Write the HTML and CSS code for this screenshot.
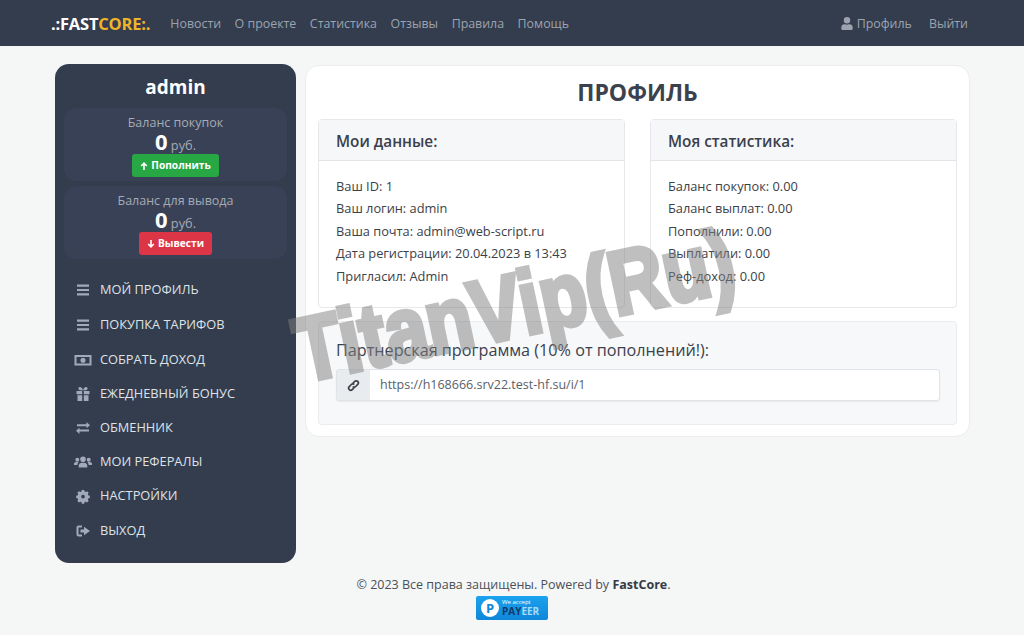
FILE: index.html
```html
<!DOCTYPE html>
<html lang="en">
<head>
    <meta charset="UTF-8">
    <meta name="viewport" content="width=device-width, initial-scale=1.0">
    <title>FastCore</title>
    <link rel="stylesheet" href="styles.css">
</head>
<body>
    <nav class="navbar">
        <a class="brand" href="#">.:FAST<span class="brand-accent">CORE:.</span></a>
        <div class="nav-links">
            <a href="#">Новости</a>
            <a href="#">О проекте</a>
            <a href="#">Статистика</a>
            <a href="#">Отзывы</a>
            <a href="#">Правила</a>
            <a href="#">Помощь</a>
        </div>
        <div class="nav-right">
            <a href="#">
                <svg class="nav-icon" viewBox="0 0 448 512"><path fill="currentColor" d="M224 256a128 128 0 1 0 0-256 128 128 0 0 0 0 256zm90 32h-17a174 174 0 0 1-146 0h-17A134 134 0 0 0 0 422v42a48 48 0 0 0 48 48h352a48 48 0 0 0 48-48v-42a134 134 0 0 0-134-134z"/></svg>
                Профиль
            </a>
            <a href="#">Выйти</a>
        </div>
    </nav>

    <div class="page">
        <aside class="sidebar">
            <div class="user-name">admin</div>
            <div class="balance">
                <div class="balance-title">Баланс покупок</div>
                <div class="balance-sum"><b>0</b> руб.</div>
                <a class="btn btn-green" href="#">
                    <svg viewBox="0 0 10 10"><path fill="none" stroke="currentColor" stroke-width="2" d="M5 10V1.500M1.500 5 5 1.500 8.500 5"/></svg>
                    Пополнить
                </a>
            </div>
            <div class="balance">
                <div class="balance-title">Баланс для вывода</div>
                <div class="balance-sum"><b>0</b> руб.</div>
                <a class="btn btn-red" href="#">
                    <svg viewBox="0 0 10 10"><path fill="none" stroke="currentColor" stroke-width="2" d="M5 0v8.500M1.500 5 5 8.500 8.500 5"/></svg>
                    Вывести
                </a>
            </div>
            <ul class="menu">
                <li class="menu-item h35">
                    <svg viewBox="0 0 18 16"><path fill="currentColor" d="M3 2.500h12v2.200H3zM3 6.900h12v2.200H3zM3 11.300h12v2.200H3z"/></svg>
                    Мой профиль
                </li>
                <li class="menu-item h35">
                    <svg viewBox="0 0 18 16"><path fill="currentColor" d="M3 2.500h12v2.200H3zM3 6.900h12v2.200H3zM3 11.300h12v2.200H3z"/></svg>
                    Покупка тарифов
                </li>
                <li class="menu-item h35">
                    <svg viewBox="0 0 18 16"><path fill="currentColor" fill-rule="evenodd" d="M.500 3h17v10.500H.500zM2.500 5v6.500h13V5zM9 5.700a2.500 2.500 0 1 1 0 5.100 2.500 2.500 0 0 1 0-5.100z"/></svg>
                    Собрать доход
                </li>
                <li class="menu-item">
                    <svg viewBox="0 0 18 16"><path fill="currentColor" d="M2.500 5h5.700v3.200H2.500zM9.800 5h5.700v3.200H9.800zM3.500 9.200h4.700V15H3.500zM9.800 9.200h4.700V15H9.800zM5.500 1c1.500-.4 3 1.200 3.500 3.200C9.500 2.200 11 .6 12.500 1c1.600.5 1.300 3.200-.5 3.200H6C4.200 4.200 3.900 1.500 5.500 1z"/></svg>
                    Ежедневный бонус
                </li>
                <li class="menu-item">
                    <svg viewBox="0 0 18 16"><path fill="currentColor" d="M3 4.300h9.500V2L16 5.300l-3.500 3V6.200H3zM15 9.600H5.500V7.700L2 10.800l3.500 3.100v-2.300H15z"/></svg>
                    Обменник
                </li>
                <li class="menu-item">
                    <svg viewBox="0 0 18 16"><path fill="currentColor" d="M9 2.500a2.800 2.800 0 1 1 0 5.600 2.800 2.800 0 0 1 0-5.600zM3.300 3.800a2 2 0 1 1 0 4 2 2 0 0 1 0-4zM14.700 3.800a2 2 0 1 1 0 4 2 2 0 0 1 0-4zM4.700 13.500v-1.800C4.700 10 6.200 8.800 8 8.800h2c1.800 0 3.300 1.200 3.300 2.900v1.800zM0 11V9.800c0-1 1-1.800 2-1.800h2.600C3.600 8.800 3.500 10 3.400 11zM18 11V9.800c0-1-1-1.800-2-1.800h-2.600c1 .8 1.100 2 1.200 3z"/></svg>
                    Мои рефералы
                </li>
                <li class="menu-item">
                    <svg viewBox="0 0 18 16"><path fill="currentColor" fill-rule="evenodd" d="M7.500.800h3l.5 2 1.300.6 1.800-1.100 2 2.100-1.100 1.800.5 1.300 2 .5v2.900l-2 .5-.5 1.300 1.100 1.800-2 2-1.800-1-1.300.5-.5 2h-3l-.5-2-1.300-.5-1.800 1-2-2 1.100-1.800-.5-1.300-2-.5V8l2-.5.5-1.300-1.100-1.800 2-2.100 1.800 1.100L7 2.800zM9 6.800a2.300 2.300 0 1 0 0 4.600 2.300 2.300 0 0 0 0-4.600z" transform="translate(1.800 1.300) scale(.8)"/></svg>
                    Настройки
                </li>
                <li class="menu-item h35">
                    <svg viewBox="0 0 18 16"><path fill="currentColor" d="M10 6.500V3.800L16 8l-6 4.200V9.500H6.500v-3zM8 2.500H4.500A2 2 0 0 0 2.500 4.500v7a2 2 0 0 0 2 2H8v-2H4.500v-7H8z"/></svg>
                    Выход
                </li>
            </ul>
        </aside>

        <main class="content">
            <h1>ПРОФИЛЬ</h1>
            <div class="cards">
                <section class="card">
                    <h2 class="card-header">Мои данные:</h2>
                    <div class="card-body">
                        <p>Ваш ID: 1</p>
                        <p>Ваш логин: admin</p>
                        <p>Ваша почта: admin@web-script.ru</p>
                        <p>Дата регистрации: 20.04.2023 в 13:43</p>
                        <p>Пригласил: Admin</p>
                    </div>
                </section>
                <section class="card">
                    <h2 class="card-header">Моя статистика:</h2>
                    <div class="card-body">
                        <p>Баланс покупок: 0.00</p>
                        <p>Баланс выплат: 0.00</p>
                        <p>Пополнили: 0.00</p>
                        <p>Выплатили: 0.00</p>
                        <p>Реф-доход: 0.00</p>
                    </div>
                </section>
            </div>
            <section class="partner">
                <h2>Партнерская программа (10% от пополнений!):</h2>
                <div class="input-group">
                    <span class="input-addon">
                        <svg viewBox="0 0 16 16"><path fill="none" stroke="currentColor" stroke-width="2" d="M7 5.500 9.500 3a2.600 2.600 0 0 1 3.700 3.700l-2.500 2.500a2.600 2.600 0 0 1-3.700 0M9 10.500 6.500 13a2.600 2.600 0 0 1-3.700-3.700l2.500-2.500a2.600 2.600 0 0 1 3.700 0"/></svg>
                    </span>
                    <span class="input-value">https://h168666.srv22.test-hf.su/i/1</span>
                </div>
            </section>
        </main>
    </div>

    <footer class="footer">
        <div class="copyright">© 2023 Все права защищены. Powered by <b>FastCore</b>.</div>
        <div class="payeer">
            <span class="payeer-logo">P</span>
            <span class="payeer-text"><small>We accept</small><b>PAY<i>EER</i></b></span>
        </div>
    </footer>

    <div class="watermark">TitanVip(Ru)</div>
</body>
</html>
```

FILE: styles.css
```css
* {
    box-sizing: border-box;
    margin: 0;
    padding: 0;
}

body {
    font-family: 'Open Sans', 'Noto Sans', sans-serif;
    font-size: 12.8px;
    line-height: 1.5;
    height: 635px;
    overflow: hidden;
    background-color: #f5f6f6;
    color: #3c4148;
}

a {
    color: inherit;
    text-decoration: none;
}

.navbar {
    display: flex;
    align-items: center;
    height: 46px;
    padding: 3px 56px 0 51px;
    font-size: 12.400px;
    background-color: #333d4e;
    color: #9da3ae;
}

.brand {
    font-size: 16.500px;
    font-weight: 700;
    color: #fff;
    margin-right: 20px;
    letter-spacing: -0.2px;
}

.brand-accent {
    color: #f0b429;
}

.nav-links {
    display: flex;
    gap: 13.500px;
}

.nav-right {
    display: flex;
    gap: 17px;
    margin-left: auto;
}

.nav-icon {
    width: 12px;
    height: 13px;
    vertical-align: -2px;
}

.page {
    display: flex;
    align-items: flex-start;
    gap: 9px;
    padding: 18px 54px 0 55px;
}

.sidebar {
    flex: 0 0 241px;
    height: 499px;
    padding: 10px 9px 0;
    border-radius: 14px;
    background-color: #333d4e;
    color: #a6abb5;
}

.user-name {
    font-size: 19px;
    font-weight: 700;
    line-height: 26px;
    color: #fff;
    text-align: center;
    margin-bottom: 8px;
}

.balance {
    height: 73px;
    margin-bottom: 5px;
    padding-top: 6px;
    border-radius: 12px;
    background-color: #384155;
    text-align: center;
}

.balance-title {
    font-size: 12.500px;
    line-height: 18px;
}

.balance-sum {
    height: 24px;
    margin-top: -2px;
    line-height: 18px;
}

.balance-sum b {
    font-size: 22px;
    line-height: 1;
    color: #fff;
}

.btn {
    display: flex;
    align-items: center;
    gap: 3px;
    width: fit-content;
    height: 23px;
    margin: 0 auto;
    padding: 0 8px;
    border-radius: 3px;
    font-size: 10.200px;
    font-weight: 700;
    color: #fff;
}

.btn svg {
    width: 8px;
    height: 8px;
}

.btn-green {
    background-color: #28a745;
}

.btn-red {
    background-color: #dc3545;
}

.menu {
    list-style: none;
    margin-top: 13px;
}

.menu-item {
    display: flex;
    align-items: center;
    height: 34px;
    padding-left: 10px;
    text-transform: uppercase;
    color: #dfe2e7;
}

.h35 {
    height: 35px;
}

.menu-item svg {
    width: 18px;
    height: 16px;
    margin-right: 8px;
    color: #a2a9b8;
}

.content {
    flex: 1;
    height: 372px;
    margin-top: 1px;
    padding: 0 12px;
    border: 1px solid #ececec;
    border-radius: 14px;
    background-color: #fff;
}

h1 {
    font-size: 23px;
    font-weight: 700;
    line-height: 52px;
    margin-bottom: 1px;
    color: #3b424e;
    text-align: center;
}

.cards {
    display: grid;
    grid-template-columns: 307px 307px;
    gap: 25px;
}

.card {
    height: 189px;
    border: 1px solid #e6e8eb;
    border-radius: 4px;
}

.card-header {
    height: 41px;
    padding: 0 17px;
    font-size: 15.300px;
    font-weight: 600;
    line-height: 42px;
    color: #3a414c;
    background-color: #f6f7f9;
    border-bottom: 1px solid #e2e4e8;
}

.card-body {
    padding: 13.500px 17px;
    line-height: 22.500px;
}

.partner {
    height: 104px;
    margin-top: 13px;
    padding: 16px 16px 0 17px;
    border: 1px solid #eaecef;
    border-radius: 4px;
    background-color: #f7f8fa;
}

.partner h2 {
    font-size: 16.200px;
    font-weight: 500;
    line-height: 24px;
    color: #3a414c;
    margin-bottom: 7px;
}

.input-group {
    display: flex;
    height: 32px;
    border: 1px solid #e0e3e7;
    border-radius: 3px;
    background-color: #fff;
    box-shadow: 0 1px 2px rgba(0, 0, 0, 0.06);
}

.input-addon {
    display: flex;
    align-items: center;
    justify-content: center;
    width: 33px;
    background-color: #e9ecef;
    color: #3c4148;
}

.input-addon svg {
    width: 13px;
    height: 13px;
}

.input-value {
    padding-left: 10px;
    font-size: 12.500px;
    line-height: 30px;
    color: #5a6068;
}

.footer {
    margin-top: 12px;
    text-align: center;
    font-size: 12.500px;
    line-height: 20px;
    color: #4b5058;
}

.copyright {
    padding-left: 3px;
}

.footer b {
    color: #333a44;
}

.payeer {
    display: flex;
    align-items: center;
    gap: 3px;
    width: 72px;
    height: 24px;
    margin: 1px auto 0;
    padding-left: 5px;
    border-radius: 2px;
    background: linear-gradient(#1aa3ef, #0f86d9);
}

.payeer-logo {
    width: 18px;
    height: 18px;
    border-radius: 50%;
    background-color: #fff;
    color: #0f86d9;
    font-size: 13px;
    font-weight: 700;
    line-height: 18px;
}

.payeer-text {
    display: flex;
    flex-direction: column;
    color: #fff;
    text-align: left;
}

.payeer-text small {
    font-size: 6px;
    line-height: 7px;
}

.payeer-text b {
    font-size: 10px;
    line-height: 11px;
    color: #123a6b;
}

.payeer-text i {
    font-style: normal;
    color: #a8dcf8;
}

.watermark {
    position: absolute;
    left: 296px;
    top: 307px;
    font-family: 'Liberation Sans', sans-serif;
    font-size: 90px;
    font-weight: 700;
    line-height: 1;
    white-space: nowrap;
    color: #808080;
    -webkit-text-stroke: 5px #808080;
    opacity: 0.5;
    transform: rotate(-12deg) scaleX(0.84);
    transform-origin: left center;
}
```
